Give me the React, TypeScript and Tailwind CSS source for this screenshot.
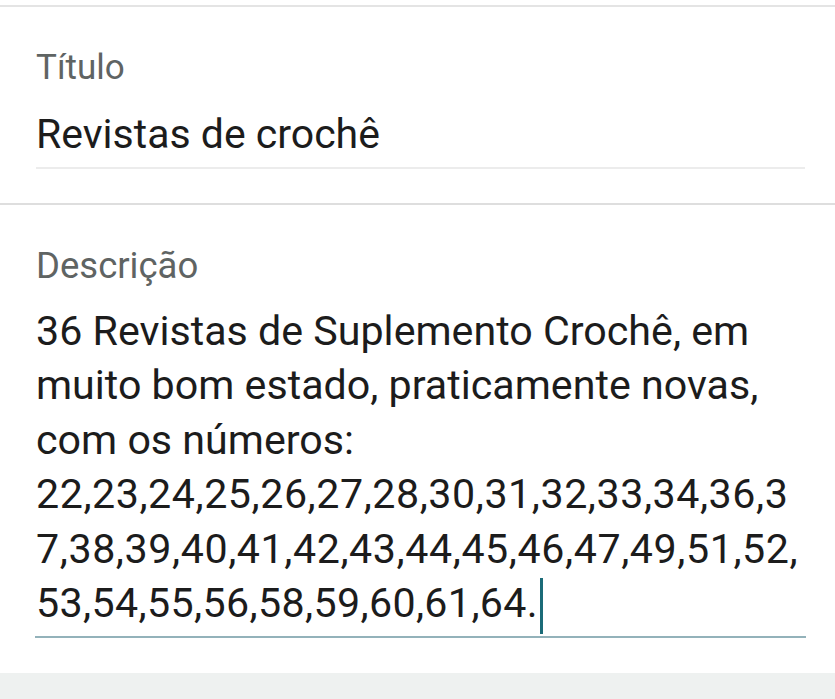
import React from 'react';

const lines: { text: string; tracking: string }[] = [
    { text: '36 Revistas de Suplemento Crochê, em', tracking: '' },
    { text: 'muito bom estado, praticamente novas,', tracking: '' },
    { text: 'com os números:', tracking: '' },
    { text: '22,23,24,25,26,27,28,30,31,32,33,34,36,3', tracking: 'tracking-[0.55px]' },
    { text: '7,38,39,40,41,42,43,44,45,46,47,49,51,52,', tracking: 'tracking-[0.58px]' },
    { text: '53,54,55,56,58,59,60,61,64.', tracking: 'tracking-[0.36px]' },
];

const App: React.FC = () => {
    return (
        <div className="min-h-screen bg-white flex flex-col font-['Roboto',sans-serif]">
            <div className="h-[5px]" />

            {/* Título */}
            <div className="border-t-2 border-[#e4e4e4] pt-[40px] px-[36px] pb-[34px]">
                <div className="text-[35px] leading-[41px] text-[#5f6463]">Título</div>
                <div className="mt-[21px] text-[41px] leading-[50px] text-[#1c1c1c]">Revistas de crochê</div>
                <div className="mt-[8px] border-b-2 border-[#ececec] -mr-[6px]" />
            </div>

            {/* Descrição */}
            <div className="border-t-2 border-[#dedede] pt-[40px] px-[36px]">
                <div className="text-[36.5px] leading-[41px] text-[#5f6463]">Descrição</div>
                <div className="mt-[18px] text-[41.2px] leading-[54.4px] text-[#1c1c1c]">
                    {lines.map((line, i) => (
                        <div key={i} className={`whitespace-nowrap ${line.tracking}`}>
                            {line.text}
                            {i === lines.length - 1 && (
                                <span className="relative inline-block w-[3px] ml-[2px]">
                                    <span className="absolute left-0 -top-[39px] w-[3px] h-[56px] bg-[#1b6b78]" />
                                </span>
                            )}
                        </div>
                    ))}
                </div>
                <div className="mt-[6px] border-b-2 border-[#93b2ba] -mr-[7px] -ml-[1px]" />
            </div>

            <div className="flex-1" />
            <div className="h-[26px] bg-[#eef1f0]" />
        </div>
    );
};

export default App;
